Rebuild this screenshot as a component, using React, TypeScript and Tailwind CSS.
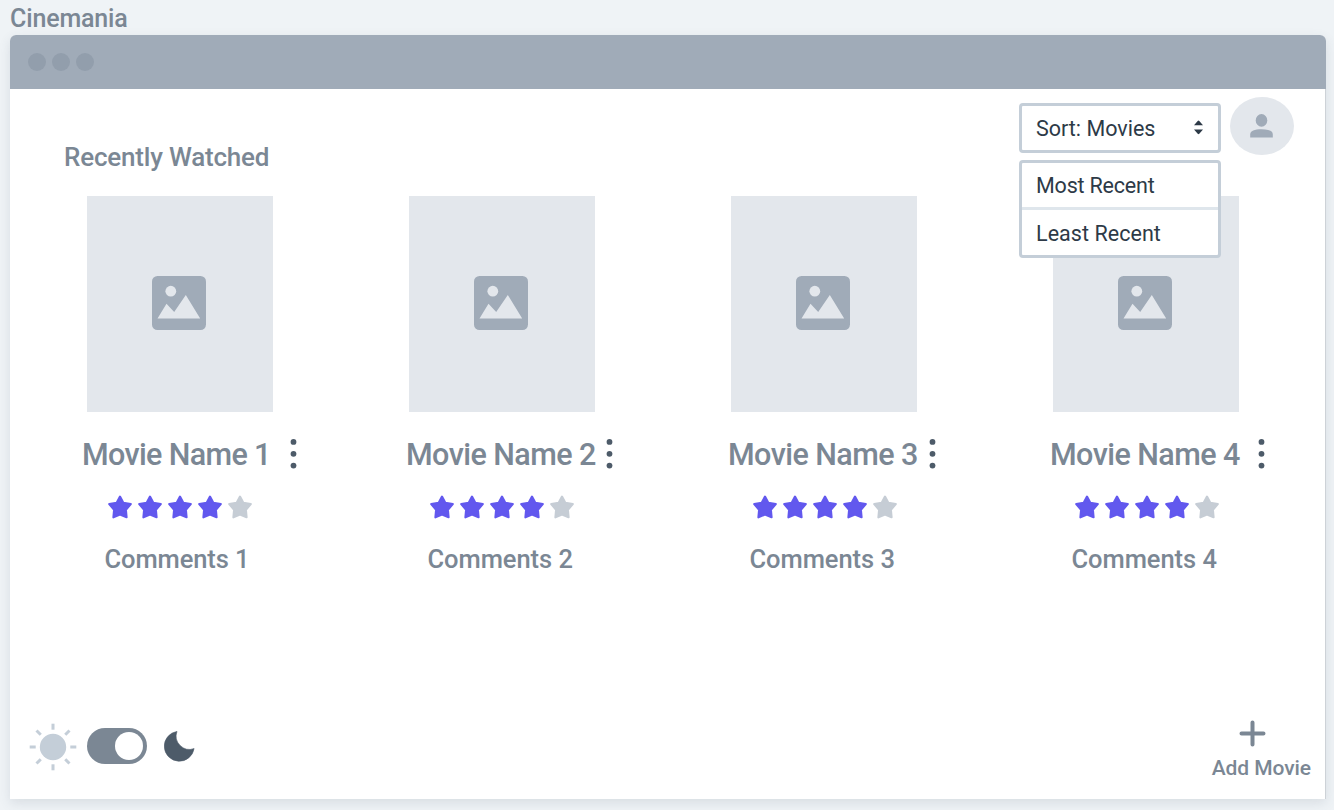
const movies = [
  { id: 1, title: "ml-[63px] tracking-[-0.65px]", menu: "left-[270px]", stars: "ml-[89px]", comment: "ml-[85.5px] tracking-[-0.1px]" },
  { id: 2, title: "ml-[65px] tracking-[-0.55px]", menu: "left-[264px]", stars: "ml-[89px]", comment: "ml-[86.5px] tracking-[-0.05px]" },
  { id: 3, title: "ml-[65px] tracking-[-0.55px]", menu: "left-[265px]", stars: "ml-[90px]", comment: "ml-[86.5px] tracking-[-0.05px]" },
  { id: 4, title: "ml-[65px] tracking-[-0.55px]", menu: "left-[272px]", stars: "ml-[90px]", comment: "ml-[86.5px] tracking-[-0.05px]" },
];

function ImageIcon() {
  return (
    <svg className="mr-0.5 mb-0.5 h-[54px] w-[54px]" viewBox="0 0 54 54">
      <rect width="54" height="54" rx="5.5" fill="#a0abb8" />
      <circle cx="18.8" cy="15.2" r="5.4" fill="#e3e7ec" />
      <path d="M5.5 42.5L14.5 27.8L22.2 36L33.8 19L48.2 42.5Z" fill="#e3e7ec" />
    </svg>
  );
}

function Star({ filled }: { filled: boolean }) {
  return (
    <svg className={filled ? "size-6 text-[#6258ee]" : "size-6 text-[#c6cdd5]"} viewBox="0 0 24 24">
      <path
        d="M12 1.6L15.3 7.7L22.8 9.1L17.9 14.8L18.6 22.3L12 19.5L5.4 22.3L6.1 14.8L1.2 9.1L8.7 7.7Z"
        fill="currentColor"
        stroke="currentColor"
        strokeWidth="2.1"
        strokeLinejoin="round"
      />
    </svg>
  );
}

function SunIcon() {
  return (
    <svg className="size-[48px]" viewBox="-24 -24 48 48">
      <circle r="13.2" fill="#c4ced8" />
      {[0, 45, 90, 135, 180, 225, 270, 315].map((a) => (
        <rect key={a} x="17.3" y="-1.5" width="6" height="3" fill="#c4ced8" transform={`rotate(${a})`} />
      ))}
    </svg>
  );
}

function MovieCard({ movie }: { movie: (typeof movies)[number] }) {
  return (
    <article className="flex w-[322px] flex-col">
      <div className="mx-[68px] flex h-[216px] items-center justify-center bg-[#e3e7ec]">
        <ImageIcon />
      </div>
      <div className="relative mt-[22px] flex h-10 items-center">
        <h2 className={`mt-0.5 whitespace-nowrap text-[30.5px] leading-10 ${movie.title}`}>Movie Name {movie.id}</h2>
        <button className={`absolute top-[5px] ${movie.menu}`} aria-label="Options">
          <svg className="h-[30px] w-[9px]" viewBox="0 0 9 30" fill="#4d5b69">
            <circle cx="4.5" cy="2.9" r="2.9" />
            <circle cx="4.5" cy="14.8" r="2.9" />
            <circle cx="4.5" cy="26.6" r="2.9" />
          </svg>
        </button>
      </div>
      <div className={`mt-[21px] flex gap-1.5 ${movie.stars}`}>
        {[1, 2, 3, 4, 5].map((n) => (
          <Star key={n} filled={n < 5} />
        ))}
      </div>
      <p className={`mt-[24px] whitespace-nowrap text-[25.5px] leading-8 ${movie.comment}`}>Comments {movie.id}</p>
    </article>
  );
}

function SortMenu() {
  return (
    <div className="relative mt-3.5 h-[50px] w-[202px] text-[21.5px] font-normal text-[#2d3a47]">
      <button className="flex h-[50px] w-full items-center justify-between rounded-[4px] border-[3px] border-[#c4ced8] bg-white pr-[15px] pl-[14px]">
        <span className="mt-0.5 whitespace-nowrap">Sort: Movies</span>
        <svg className="mb-0.5 h-[15px] w-[9px]" viewBox="0 0 9 15" fill="#2d3a47">
          <path d="M0 5.2L3.7 1Q4.5.2 5.3 1L9 5.2ZM0 9.6H9L5.3 13.8Q4.5 14.6 3.7 13.8Z" />
        </svg>
      </button>
      <ul className="absolute top-[57px] left-0 h-[98px] w-full rounded-[4px] border-[3px] border-[#c4ced8] bg-white">
        <li className="flex h-[47px] items-center border-b-[3px] border-[#dfe6ec] pt-0.5 pl-[14px] tracking-[-0.2px]">Most Recent</li>
        <li className="flex h-[45px] items-center pt-1 pl-[14px] tracking-[0.05px]">Least Recent</li>
      </ul>
    </div>
  );
}

export default function App() {
  return (
    <div className="flex h-[810px] w-[1334px] flex-col overflow-hidden bg-[#eff3f6] pr-2 pl-2.5 font-['Roboto',sans-serif] font-medium text-[#7b8794]">
      <h1 className="h-[35px] text-[25px] leading-[38px] tracking-[-0.15px]">Cinemania</h1>
      <div className="flex h-[764px] flex-col rounded-t-[6px] bg-white shadow-[0_4px_12px_rgba(60,80,100,0.13)]">
        <div className="flex h-[54px] shrink-0 items-center gap-1.5 rounded-t-[6px] bg-[#a0abb8] pl-[18px]">
          <span className="size-[18px] rounded-full bg-[#929eac]" />
          <span className="size-[18px] rounded-full bg-[#929eac]" />
          <span className="size-[18px] rounded-full bg-[#929eac]" />
        </div>
        <main className="flex flex-1 flex-col border-r border-[#cdd2d7]">
          <div className="relative z-10 flex h-[107px] items-start">
            <h2 className="mt-[50px] mr-auto ml-[54px] whitespace-nowrap text-[26px] leading-9 tracking-[-0.2px]">Recently Watched</h2>
            <SortMenu />
            <div className="mt-2 mr-[31px] ml-[9px] flex h-[58px] w-[64px] items-center justify-center rounded-[50%] bg-[#e3e7ec]">
              <svg className="mr-0.5 h-6 w-[23px]" viewBox="0 0 23 24" fill="#a0abb8">
                <ellipse cx="11.5" cy="6.4" rx="5.8" ry="6.3" />
                <path d="M.2 20.5C.2 16.8 4.5 15.3 11.5 15.3S22.8 16.8 22.8 20.5V23.5H.2Z" />
              </svg>
            </div>
          </div>
          <section className="flex pl-[9px]">
            {movies.map((movie) => (
              <MovieCard key={movie.id} movie={movie} />
            ))}
          </section>
          <footer className="mt-auto flex h-[82px] items-start justify-between pr-[14px] pl-[19px]">
            <div className="mt-[5px] flex h-[50px] items-center">
              <SunIcon />
              <button className="mb-0.5 ml-[10px] flex h-9 w-[60px] items-center justify-end rounded-full bg-[#7b8794] pr-1" aria-label="Dark mode">
                <span className="size-[28px] rounded-full bg-white" />
              </button>
              <svg className="mb-0.5 ml-[17px] size-[31px]" viewBox="0 0 31 31">
                <path d="M13 .4A15 15 0 1 0 30.1 17.6A13.4 13.4 0 0 1 13 .4Z" fill="#4d5b69" stroke="#4d5b69" strokeWidth=".6" strokeLinejoin="round" />
              </svg>
            </div>
            <button className="flex flex-col items-center">
              <svg className="mt-[3px] mr-[17px] h-[27px] w-[27px]" viewBox="0 0 27 27" stroke="#7b8794" strokeWidth="4" strokeLinecap="round">
                <path d="M13.5 2.5V24.5M2.5 13.5H24.5" />
              </svg>
              <span className="mt-[7px] whitespace-nowrap text-[21px] leading-7 tracking-[-0.08px]">Add Movie</span>
            </button>
          </footer>
        </main>
      </div>
    </div>
  );
}
